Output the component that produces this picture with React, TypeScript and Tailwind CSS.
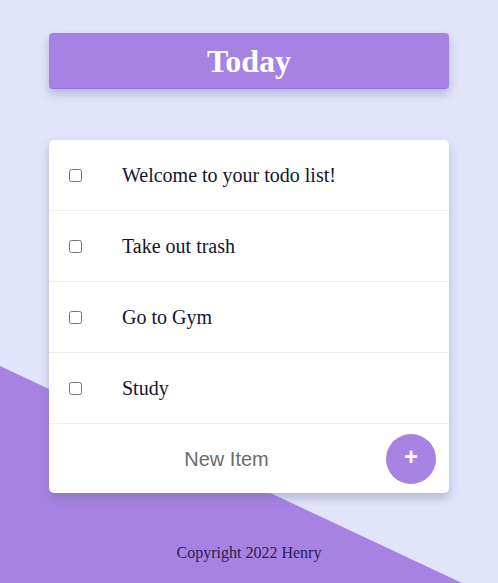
const todos = ["Welcome to your todo list!", "Take out trash", "Go to Gym", "Study"];

export default function App() {
  return (
    <div className="relative min-h-[583px] overflow-hidden bg-[#e1e4fb] font-['Liberation_Serif',serif]">
      {/* diagonal purple backdrop */}
      <div className="absolute inset-0 bg-[#a683e3] [clip-path:polygon(0_366px,462px_583px,0_583px)]" />

      <div className="relative mx-auto flex w-[400px] flex-col pt-[33px]">
        <header className="flex h-[56px] items-center justify-center rounded-[4px] border-b border-[#9a72e0] bg-[#a683e3] shadow-[0_5px_10px_rgba(100,100,150,0.35)]">
          <h1 className="text-[32px] font-bold text-white">Today</h1>
        </header>

        <div className="mt-[51px] overflow-hidden rounded-[5px] bg-white shadow-[0_5px_10px_rgba(100,100,150,0.35)]">
          {todos.map((t) => (
            <div key={t} className="flex h-[71px] items-center border-b border-[#eeeeee]">
              <input type="checkbox" className="ml-[20px] h-[13px] w-[13px]" />
              <span className="ml-[40px] text-[20px] text-[#14142e]">{t}</span>
            </div>
          ))}
          <div className="flex h-[69px] items-center">
            <span className="flex-1 pl-[18px] text-center font-['Liberation_Sans',sans-serif] text-[20px] text-[#6b6b6b]">
              New Item
            </span>
            <button className="mr-[13px] flex h-[50px] w-[50px] items-center justify-center rounded-full bg-[#a683e3] pb-[3px] font-['Liberation_Sans',sans-serif] text-[24px] font-bold leading-none text-white">
              +
            </button>
          </div>
        </div>

        <p className="mt-[48px] text-center text-[16px] text-[#2a2050]">Copyright 2022 Henry</p>
      </div>
    </div>
  );
}
